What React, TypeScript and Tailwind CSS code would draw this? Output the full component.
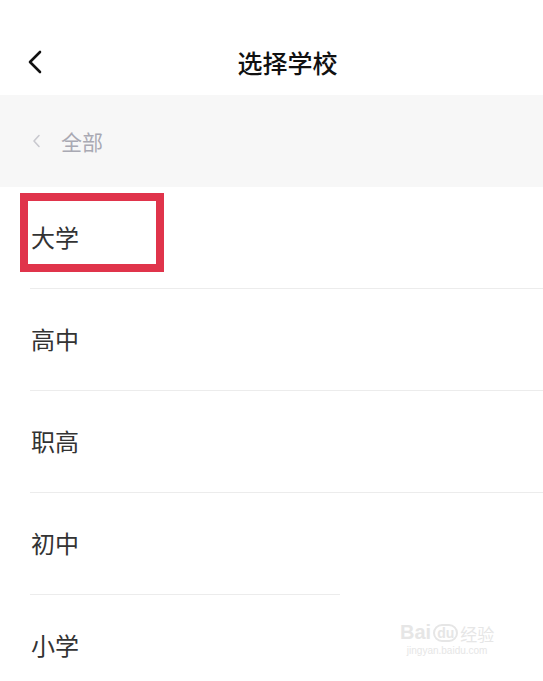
import React from "react";

const items = ["大学", "高中", "职高", "初中", "小学"];

export default function App() {
  return (
    <div
      className="w-[543px] h-[681px] bg-white overflow-hidden relative"
      style={{ fontFamily: '"Noto Sans CJK SC", "Noto Sans", sans-serif' }}
    >
      {/* Header */}
      <div className="h-[95px] relative pt-[50px]">
        <svg className="absolute left-[26px] top-[50px]" width="18" height="24" viewBox="0 0 18 24">
          <path d="M14 2 L4 12 L14 22" fill="none" stroke="#111" strokeWidth="2.6" strokeLinecap="round" strokeLinejoin="round" />
        </svg>
        <div className="w-full pl-[32px] text-center text-[25px] font-medium text-[#111] leading-none">选择学校</div>
      </div>
      {/* Breadcrumb band */}
      <div className="h-[92px] bg-[#f7f7f7] flex items-center pl-[32px] gap-[20px]">
        <svg width="9" height="14" viewBox="0 0 9 14">
          <path d="M7 1.5 L2 7 L7 12.5" fill="none" stroke="#c9c9cf" strokeWidth="1.6" strokeLinecap="round" strokeLinejoin="round" />
        </svg>
        <span className="text-[21px] text-[#a9a9b3] leading-none">全部</span>
      </div>
      {/* List */}
      <div className="flex flex-col">
        {items.map((t, i) => (
          <div key={t} className="flex flex-col">
            <div className="h-[101px] flex items-center pl-[31px] relative">
              {i === 0 && (
                <div className="absolute left-[20px] top-[6px] w-[144px] h-[79px] border-[8px] border-[#e0344b]" />
              )}
              <span className="text-[24px] text-[#333] leading-none -mt-[2px]">{t}</span>
            </div>
            {i < 3 && <div className="ml-[30px] h-[1px] bg-[#ececec]" />}
            {i === 3 && <div className="ml-[30px] w-[310px] h-[1px] bg-[#ececec]" />}
          </div>
        ))}
      </div>
      {/* Watermark */}
      <div className="absolute left-[400px] top-[622px] flex flex-col items-center text-[#e6e6e6] leading-none">
        <div className="flex items-end gap-[2px]">
          <span className="text-[20px] font-bold" style={{ fontFamily: '"Liberation Sans", sans-serif' }}>Bai</span>
          <span className="text-[14px] font-bold border-2 border-[#e6e6e6] rounded-full px-[2px]" style={{ fontFamily: '"Liberation Sans", sans-serif' }}>du</span>
          <span className="text-[17px]">经验</span>
        </div>
        <span className="text-[10px] mt-[4px]" style={{ fontFamily: '"Liberation Sans", sans-serif' }}>jingyan.baidu.com</span>
      </div>
    </div>
  );
}
